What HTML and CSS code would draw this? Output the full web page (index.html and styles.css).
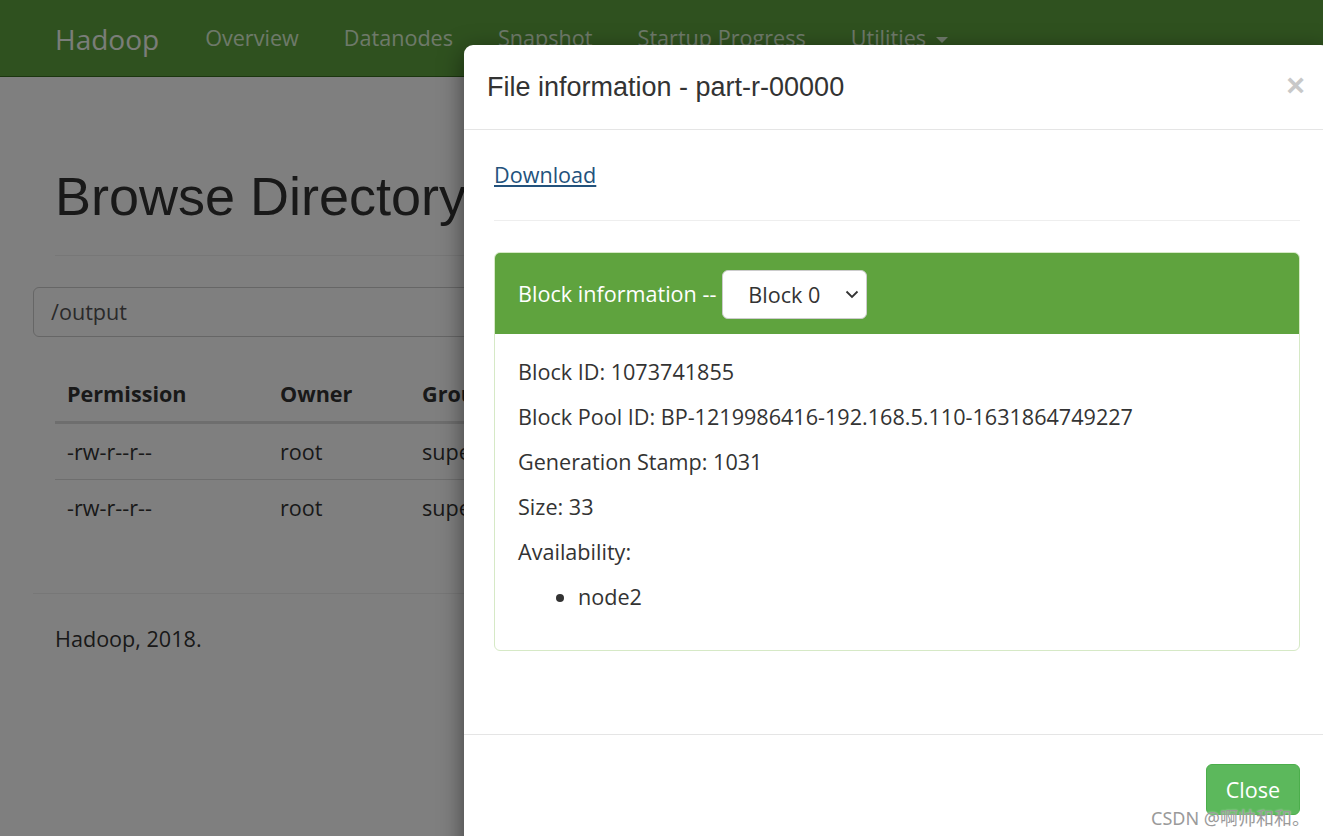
FILE: index.html
```html
<!DOCTYPE html>
<html>
<head>
<meta charset="utf-8">
<title>Browsing HDFS</title>
<link rel="stylesheet" href="styles.css">
</head>
<body>
<header class="navbar">
  <span class="brand">Hadoop</span>
  <nav class="nav">
    <span class="nav-link">Overview</span>
    <span class="nav-link">Datanodes</span>
    <span class="nav-link">Snapshot</span>
    <span class="nav-link">Startup Progress</span>
    <span class="nav-link">Utilities <span class="caret"></span></span>
  </nav>
</header>

<main class="container">
  <div class="page-header">
    <h1>Browse Directory</h1>
  </div>
  <div class="path-input">/output</div>
  <table class="listing">
    <thead>
      <tr><th class="c1">Permission</th><th class="c2">Owner</th><th class="c3">Group</th></tr>
    </thead>
    <tbody>
      <tr><td>-rw-r--r--</td><td>root</td><td>supergroup</td></tr>
      <tr><td>-rw-r--r--</td><td>root</td><td>supergroup</td></tr>
    </tbody>
  </table>
  <hr class="footer-rule">
  <footer class="page-footer">Hadoop, 2018.</footer>
</main>

<div class="backdrop"></div>

<div class="modal">
  <div class="modal-header">
    <h4 class="modal-title">File information - part-r-00000</h4>
    <span class="close">&times;</span>
  </div>
  <div class="modal-body">
    <a class="download" href="#">Download</a>
    <hr class="body-rule">
    <div class="panel">
      <div class="panel-heading">
        <span>Block information --</span>
        <span class="select">Block 0
          <svg class="chev" width="14" height="9" viewBox="0 0 14 9"><path d="M1.5 1.5 L7 7 L12.5 1.5" fill="none" stroke="#333" stroke-width="1.8"/></svg>
        </span>
      </div>
      <div class="panel-body">
        <p>Block ID: 1073741855</p>
        <p>Block Pool ID: BP-1219986416-192.168.5.110-1631864749227</p>
        <p>Generation Stamp: 1031</p>
        <p>Size: 33</p>
        <p>Availability:</p>
        <ul>
          <li>node2</li>
        </ul>
      </div>
    </div>
  </div>
  <div class="modal-footer">
    <span class="btn-close">Close</span>
  </div>
</div>

<div class="watermark">CSDN @啊帅和和。</div>
</body>
</html>
```

FILE: styles.css
```css
* { box-sizing: border-box; }
html, body { margin: 0; padding: 0; }
body {
  width: 1323px;
  height: 836px;
  overflow: hidden;
  background: #fff;
  color: #333;
  font-family: "Open Sans", "Noto Sans", "Noto Sans CJK SC", sans-serif;
  font-size: 21.6px;
  line-height: 30px;
  position: relative;
}

.navbar {
  height: 77px;
  background: #5fa33e;
  border-bottom: 1px solid #366d1f;
  display: flex;
  align-items: center;
  padding-left: 55px;
}
.brand {
  font-size: 28px;
  color: #f5fbf2;
  margin-right: 46px;
  margin-top: 1px;
}
.nav { display: flex; gap: 45px; }
.nav-link { color: #dcf2d4; font-size: 21.6px; }
.caret {
  display: inline-block;
  width: 0; height: 0;
  border-left: 6px solid transparent;
  border-right: 6px solid transparent;
  border-top: 6px solid #dcf2d4;
  vertical-align: middle;
  margin-left: 4px;
}

.container { padding: 0 0 0 33px; }
.page-header {
  margin: 89px 0 31px 22px;
  padding-bottom: 29px;
  border-bottom: 1px solid #eee;
}
.page-header h1 {
  margin: 0;
  font-family: "Liberation Sans", Arial, sans-serif;
  font-weight: 400;
  font-size: 54px;
  line-height: 60px;
  color: #333;
}
.path-input {
  width: 1260px;
  height: 50px;
  border: 1px solid #ccc;
  border-radius: 6px;
  padding: 9px 17px;
  color: #555;
}
.listing {
  margin: 29px 0 0 22px;
  border-collapse: collapse;
  width: 1230px;
  text-align: left;
}
.listing th, .listing td {
  padding: 13px 12px;
  line-height: 30px;
  white-space: nowrap;
}
.listing th { font-weight: 700; border-bottom: 3px solid #ddd; padding-bottom: 12px; }
.listing td { border-top: 1px solid #ddd; padding: 13px 12px 12px; }
.listing tbody tr:first-child td { border-top: none; }
.listing th.c1 { width: 213px; }
.listing th.c2 { width: 142px; }
.footer-rule {
  margin: 58px 0 0 0;
  border: 0;
  border-top: 1px solid #eee;
  width: 1290px;
}
.page-footer { margin: 30px 0 0 22px; }

.backdrop {
  position: absolute;
  inset: 0;
  background: rgba(0, 0, 0, 0.5);
}

.modal {
  position: absolute;
  left: 464px;
  top: 45px;
  width: 866px;
  height: 830px;
  background: #fff;
  border-radius: 9px;
  box-shadow: 0 7px 24px rgba(0, 0, 0, 0.5);
}
.modal-header {
  height: 85px;
  border-bottom: 1px solid #e5e5e5;
  display: flex;
  align-items: center;
  justify-content: space-between;
  padding: 0 25px 0 23px;
}
.modal-title {
  margin: 0;
  font-family: "Liberation Sans", Arial, sans-serif;
  font-weight: 400;
  font-size: 27px;
  color: #333;
}
.close {
  font-family: "Liberation Sans", Arial, sans-serif;
  font-size: 32px;
  font-weight: 700;
  color: #c8c8c8;
  line-height: 1;
  margin-top: -4px;
}
.modal-body { padding: 30px 30px 83px 30px; }
.download {
  display: block;
  color: #23527c;
  text-decoration: underline;
}
.body-rule {
  margin: 30px 0 31px;
  border: 0;
  border-top: 1px solid #eee;
}
.panel {
  border: 1px solid #d6e9c6;
  border-radius: 6px;
  overflow: hidden;
}
.panel-heading {
  background: #5fa33e;
  color: #fff;
  height: 81px;
  padding: 0 23px;
  display: flex;
  align-items: center;
  gap: 6px;
}
.select {
  width: 145px;
  height: 49px;
  background: #fff;
  border: 1px solid #ccc;
  border-radius: 6px;
  color: #333;
  display: flex;
  align-items: center;
  justify-content: space-between;
  padding: 0 7px 0 25px;
  margin-top: 2px;
}
.panel-body { padding: 23px 23px 23px; }
.panel-body p { margin: 0 0 15px; }
.panel-body ul { margin: 0 0 15px; padding-left: 60px; }
.modal-footer {
  border-top: 1px solid #e5e5e5;
  padding: 29px 30px;
  display: flex;
  justify-content: flex-end;
}
.btn-close {
  width: 94px;
  height: 51px;
  background: #5cb85c;
  border: 1px solid #4cae4c;
  border-radius: 6px;
  color: #fff;
  display: flex;
  align-items: center;
  justify-content: center;
}

.watermark {
  position: absolute;
  right: 13px;
  bottom: 3px;
  font-family: "Noto Sans", "Noto Sans CJK SC", sans-serif;
  font-size: 18px;
  color: #9a9a9a;
  text-shadow: 0 0 2px rgba(255,255,255,.6);
}
```
